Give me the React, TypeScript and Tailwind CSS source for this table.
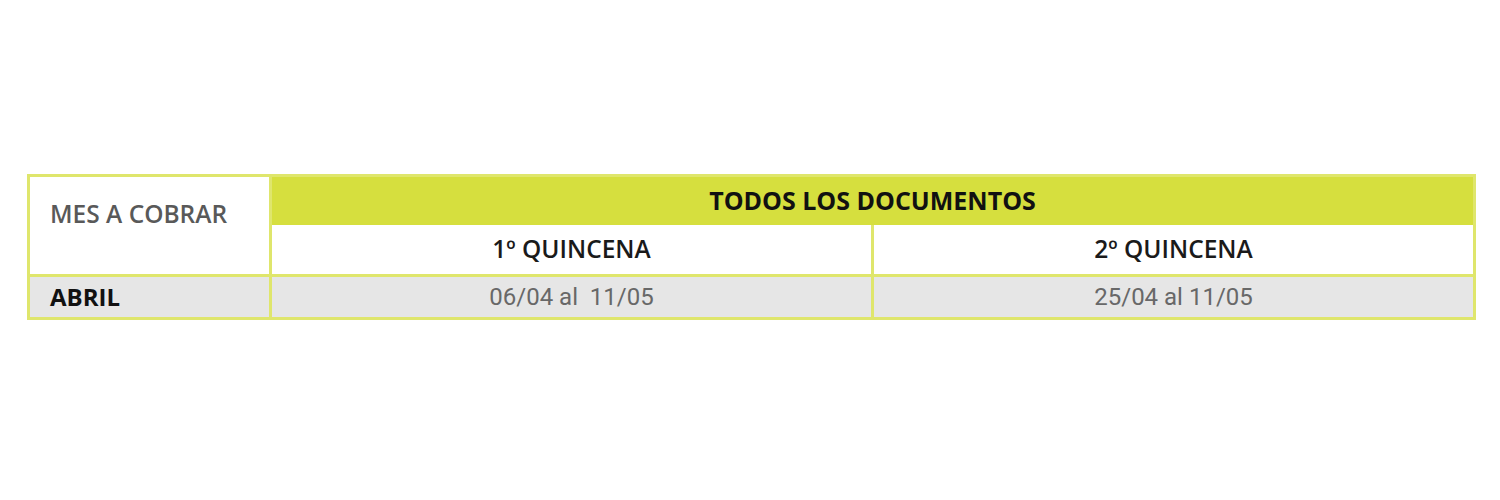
import React from "react";

const BORDER = "border-[3px] border-[#dfe66c]";

const rows = [{ mes: "ABRIL", q1: "06/04 al\u00a0 11/05", q2: "25/04 al 11/05" }];

export default function App() {
  return (
    <div className="min-h-[500px] bg-white pt-[174px] pl-[27px] font-['Open_Sans',sans-serif]">
      <table className={`w-[1446px] table-fixed border-collapse ${BORDER}`}>
        <colgroup>
          <col className="w-[242px]" />
          <col className="w-[602px]" />
          <col className="w-[602px]" />
        </colgroup>
        <thead>
          <tr>
            <th
              rowSpan={2}
              className={`${BORDER} bg-white pl-[20px] pb-[37px] pt-[22px] text-left align-top text-[24.5px] leading-[30px] font-semibold text-[#595959]`}
            >
              MES A COBRAR
            </th>
            <th colSpan={2} className="h-[49px] bg-[#d6df3e] text-center text-[25px] font-bold text-[#111]">
              TODOS LOS DOCUMENTOS
            </th>
          </tr>
          <tr>
            <th className={`${BORDER} h-[51px] border-t-0 bg-white text-center text-[24.5px] font-semibold text-[#1a1a1a]`}>
              1º QUINCENA
            </th>
            <th className={`${BORDER} h-[51px] border-t-0 bg-white text-center text-[24.5px] font-semibold text-[#1a1a1a]`}>
              2º QUINCENA
            </th>
          </tr>
        </thead>
        <tbody>
          {rows.map((r) => (
            <tr key={r.mes} className="bg-[#e6e6e6]">
              <td className={`${BORDER} h-[43px] pl-[20px] text-[24px] font-bold text-[#111]`}>{r.mes}</td>
              <td className={`${BORDER} text-center font-['Roboto',sans-serif] text-[24px] text-[#686868]`}>{r.q1}</td>
              <td className={`${BORDER} text-center font-['Roboto',sans-serif] text-[24px] text-[#686868]`}>{r.q2}</td>
            </tr>
          ))}
        </tbody>
      </table>
    </div>
  );
}
